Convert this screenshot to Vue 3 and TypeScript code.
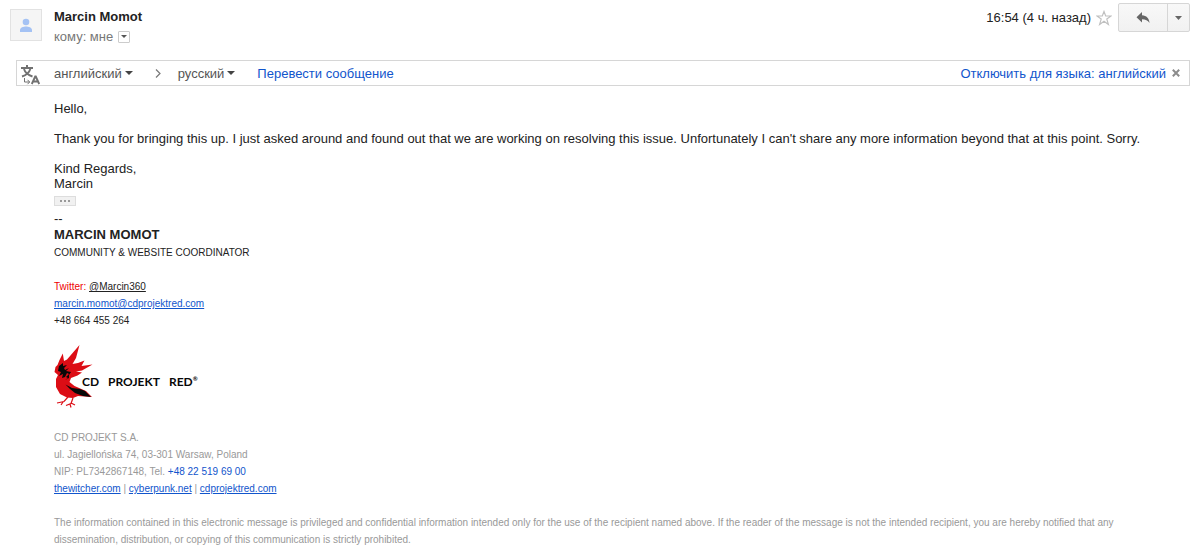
<script setup lang="ts">
import { ref } from 'vue'

const starred = ref(false)
const sourceLanguage = ref('английский')
const targetLanguage = ref('русский')
const showTranslate = ref(true)
const sites: string[] = ['thewitcher.com', 'cyberpunk.net', 'cdprojektred.com']
</script>

<template>
  <article class="message">
    <header class="head">
      <svg class="avatar" viewBox="0 0 32 32" aria-hidden="true">
        <rect x="0.5" y="0.5" width="31" height="31" fill="#f5f5f5" stroke="#e2e2e2" />
        <circle cx="16" cy="13" r="3.3" fill="#a4c2f4" />
        <path d="M10 23v-2c0-2.500 3.500-3.500 6-3.500s6 1 6 3.500v2z" fill="#a4c2f4" />
      </svg>
      <div class="people">
        <h1 class="sender">Marcin Momot</h1>
        <div class="recipient">
          <span>кому: мне</span>
          <button class="details" type="button" aria-label="Показать подробности">
            <svg width="6" height="3" viewBox="0 0 6 3"><path d="M0 0h6L3 3z" fill="#555" /></svg>
          </button>
        </div>
      </div>
      <div class="actions">
        <time class="time">16:54 (4 ч. назад)</time>
        <button class="star" type="button" aria-label="Пометить" :aria-pressed="starred" @click="starred = !starred">
          <svg width="16" height="16" viewBox="0 0 16 16">
            <path d="M8 1.500l1.700 4.500h5.300l-4.200 3.100 1.600 5.400L8 11.300l-4.400 3.200 1.600-5.400L1 6h5.300z" :fill="starred ? '#f4c84b' : '#fff'" stroke="#c0c0c0" stroke-width="1.200" />
          </svg>
        </button>
        <div class="split">
          <button class="reply" type="button" aria-label="Ответить">
            <svg width="14" height="12" viewBox="0 0 14 12"><path d="M6 0v3.300c4.500.2 7 3 7.500 7.700C11.800 8.400 9.700 7.200 6 7.200v3.300L.5 5.200z" fill="#666" /></svg>
          </button>
          <button class="more" type="button" aria-label="Ещё">
            <svg width="7" height="4" viewBox="0 0 7 4"><path d="M0 0h7L3.500 4z" fill="#666" /></svg>
          </button>
        </div>
      </div>
    </header>

    <section v-if="showTranslate" class="translate">
      <svg class="translate-icon" width="20" height="20" viewBox="0 0 20 20" fill="none" stroke="#717171" aria-hidden="true">
        <path d="M0 3h12M6 0v3" stroke-width="2" />
        <path d="M3 4c1 3.500 4 6 8.500 7.500M9.300 4C8.300 7.500 5.500 10 1 11.500" stroke-width="1.900" />
        <path d="M3.500 13v4h5M6.500 14.800L8.700 17l-2.200 2.200" stroke-width="1" />
        <path d="M10.800 19l3.400-7.500h.6L18.200 19M12 16.500h5" stroke-width="1.900" />
      </svg>
      <button class="language source" type="button">
        {{ sourceLanguage }}<svg width="8" height="4" viewBox="0 0 8 4"><path d="M0 0h8L4 4z" fill="#444" /></svg>
      </button>
      <svg class="direction" width="6" height="9" viewBox="0 0 6 9" aria-hidden="true"><path d="M1 .5l4 4-4 4" fill="none" stroke="#777" stroke-width="1.200" /></svg>
      <button class="language target" type="button">
        {{ targetLanguage }}<svg width="8" height="4" viewBox="0 0 8 4"><path d="M0 0h8L4 4z" fill="#444" /></svg>
      </button>
      <a class="plain" href="#translate">Перевести сообщение</a>
      <a class="plain disable" href="#disable">Отключить для языка: английский</a>
      <button class="close" type="button" aria-label="Закрыть" @click="showTranslate = false">
        <svg width="8" height="8" viewBox="0 0 8 8"><path d="M.8.8l6.400 6.400M7.200.8L.8 7.200" stroke="#8c8c8c" stroke-width="2" /></svg>
      </button>
    </section>

    <div class="body">
      <p>Hello,</p>
      <p>Thank you for bringing this up. I just asked around and found out that we are working on resolving this issue. Unfortunately I can't share any more information beyond that at this point. Sorry.</p>
      <p class="closing">Kind Regards,<br />Marcin</p>
      <button class="trimmed" type="button" aria-label="Показать скрытый текст">
        <svg width="10" height="2" viewBox="0 0 10 2"><path d="M0 0h2v2H0zM4 0h2v2H4zM8 0h2v2H8z" fill="#999" /></svg>
      </button>

      <div class="dashes">--</div>
      <h2 class="signature">MARCIN MOMOT</h2>
      <div class="small role">COMMUNITY &amp; WEBSITE COORDINATOR</div>
      <div class="small contact">
        <div><span class="red">Twitter:</span> <a class="dark" href="#twitter">@Marcin360</a></div>
        <div><a href="mailto:marcin.momot@cdprojektred.com">marcin.momot@cdprojektred.com</a></div>
        <div>+48 664 455 264</div>
      </div>

      <div class="logo">
        <svg class="bird" width="39" height="63" viewBox="0 0 39 63" aria-hidden="true">
          <path fill="#dc0d15" d="M25.500 0L22 13l-3.500 6L24 18l6.500-2.500-3 5.500 11-1.500L28 25.500l-6 1 6 1-4.500 3L17 33l-1.500 4 5 4L32 46l6 6-14-1-5 2-6-.5L6 49l-4-7V34l2-4-3.500-3 1-5 2-2 2-5L8.800 8.500 10 16l3-1.500z" />
          <path fill="#080808" d="M9 18l-4 3-1 5 3 1-2 4 4-2-1 4 3-1 2-4 2 1-3 3 2 1-3 2 4-2v-3l2-3-5-1 3-3-4 2-1-2 3-3-4 1zM11.500 39.500l6.500 3.500 8 1 5 2 6 6-8-1-8-3-5-4z" />
          <path fill="none" stroke="#dc0d15" stroke-width="1.200" d="M14 52l-4 4.500-7 1.500M9 57l-2 3M19 53l-2 5.500-5 2M16 59l1 3.500M17 58l4 2" />
        </svg>
        <div class="wordmark"><span>CD</span><span>PROJEKT</span><span class="last">RED<small>®</small></span></div>
      </div>

      <div class="small company">
        <div>CD PROJEKT S.A.</div>
        <div>ul. Jagiellońska 74, 03-301 Warsaw, Poland</div>
        <div>NIP: PL7342867148, Tel. <a class="phone" href="tel:+48225196900">+48 22 519 69 00</a></div>
        <div>
          <template v-for="(site, index) in sites" :key="site"><template v-if="index"> | </template><a :href="`#${site}`">{{ site }}</a></template>
        </div>
        <p class="notice">The information contained in this electronic message is privileged and confidential information intended only for the use of the recipient named above. If the reader of the message is not the intended recipient, you are hereby notified that any dissemination, distribution, or copying of this communication is strictly prohibited.</p>
      </div>
    </div>
  </article>
</template>

<style>
body {
  margin: 0;
  background: #fff;
}
</style>

<style scoped>
.message {
  padding: 3px 6px 0 10px;
  color: #222;
  font: 13px/15px "Liberation Sans", Arial, sans-serif;
}
button {
  display: flex;
  align-items: center;
  justify-content: center;
  margin: 0;
  padding: 0;
  border: 0;
  background: none;
  color: inherit;
  font: inherit;
}
svg {
  flex: none;
}
a {
  color: #15c;
}
.head {
  display: flex;
  align-items: flex-start;
}
.avatar {
  width: 32px;
  height: 32px;
  margin-top: 6px;
}
.people {
  flex: 1;
  margin: 6px 0 0 12px;
}
.sender {
  margin: 0;
  font-size: 13px;
  line-height: 15px;
}
.recipient {
  display: flex;
  align-items: center;
  gap: 5px;
  margin-top: 5px;
  color: #777;
}
.details {
  box-sizing: border-box;
  width: 12px;
  height: 12px;
  border: 1px solid #ccc;
  border-radius: 1px;
}
.actions {
  display: flex;
  align-items: center;
}
.star {
  margin: 0 6px 0 5px;
}
.split {
  display: flex;
  box-sizing: border-box;
  height: 29px;
  border: 1px solid #d6d6d6;
  border-radius: 2px;
  background: linear-gradient(#f8f8f8, #f1f1f1);
}
.reply {
  width: 48px;
}
.more {
  width: 22px;
  border-left: 1px solid #d6d6d6;
}
.translate {
  display: flex;
  align-items: center;
  box-sizing: border-box;
  height: 26px;
  margin: 16px 0 0 6px;
  padding: 0 9px 0 4px;
  border: 1px solid #d6d6d6;
}
.translate-icon {
  margin-top: 3px;
}
.language {
  gap: 3px;
  color: #555;
}
.source {
  margin-left: 13px;
}
.direction {
  margin: 0 17px 0 22px;
}
.target {
  margin-right: 22px;
}
.plain {
  text-decoration: none;
}
.disable {
  margin-left: auto;
}
.close {
  margin-left: 6px;
}
.body {
  padding: 15px 16px 0 44px;
}
.body p {
  margin: 0 0 15px;
}
.body .closing {
  margin-bottom: 5px;
}
.trimmed {
  box-sizing: border-box;
  width: 22px;
  height: 10px;
  border: 1px solid #ddd;
  background: #f1f1f1;
}
.dashes {
  margin-top: 5px;
}
.signature {
  margin: 0;
  font-size: 13px;
  line-height: 17px;
}
.small {
  font-size: 10px;
  line-height: 17px;
}
.role {
  margin-top: 1px;
}
.contact {
  margin-top: 17px;
}
.red {
  color: #e00;
}
.dark {
  color: #222;
}
.logo {
  display: flex;
  align-items: center;
  margin: 16px 0 21px;
}
.bird {
  margin-right: -11px;
}
.wordmark {
  display: flex;
  gap: 9px;
  padding-top: 10px;
  color: #080808;
  font: bold 12px/15px Lato, sans-serif;
}
.last {
  display: flex;
}
.wordmark small {
  font-size: 6px;
  line-height: 10px;
}
.company {
  color: #999;
}
.phone {
  text-decoration: none;
}
.body .notice {
  margin: 17px 0 0;
}
</style>
